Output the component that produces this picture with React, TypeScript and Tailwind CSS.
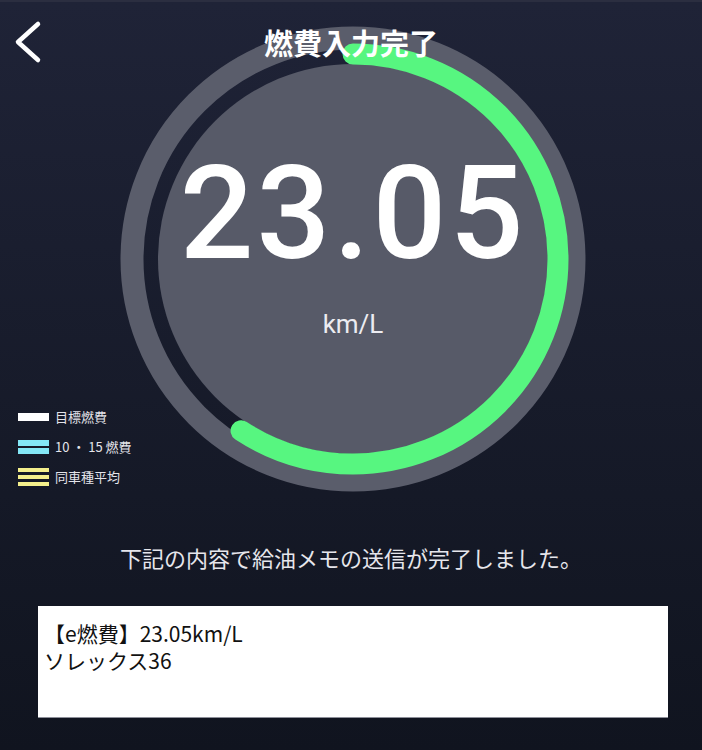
import React from 'react';

// Gauge geometry (svg is 470x470, center 235,235)
const GAUGE_SIZE = 470;
const ARC_R = 205;
const ARC_DEG = 213;

const legendRows = [
  { label: '目標燃費', kind: 'white' },
  { label: '10 ・ 15 燃費', kind: 'cyan' },
  { label: '同車種平均', kind: 'yellow' },
];

const LegendSwatch: React.FC<{ kind: string }> = ({ kind }) => {
  if (kind === 'white') {
    return <div className="w-[31px] h-[8px] bg-white" />;
  }
  if (kind === 'cyan') {
    return (
      <div className="w-[31px] flex flex-col gap-[2px]">
        <div className="h-[6px] bg-[#84e7f6]" />
        <div className="h-[6px] bg-[#84e7f6]" />
      </div>
    );
  }
  return (
    <div className="w-[31px] flex flex-col gap-[3px]">
      <div className="h-[4px] bg-[#f4ef8c]" />
      <div className="h-[4px] bg-[#f4ef8c]" />
      <div className="h-[4px] bg-[#f4ef8c]" />
    </div>
  );
};

const Gauge: React.FC = () => {
  const c = GAUGE_SIZE / 2;
  const circumference = 2 * Math.PI * ARC_R;
  const arcLen = (ARC_DEG / 360) * circumference;

  return (
    <svg width={GAUGE_SIZE} height={GAUGE_SIZE} viewBox={`0 0 ${GAUGE_SIZE} ${GAUGE_SIZE}`}>
      {/* outer track */}
      <circle cx={c} cy={c} r={221} fill="none" stroke="#5a5d6b" strokeWidth={23} />
      {/* inner disk */}
      <circle cx={c} cy={c} r={195} fill="#575a68" />
      {/* progress */}
      <circle
        cx={c}
        cy={c}
        r={ARC_R}
        fill="none"
        stroke="#57f680"
        strokeWidth={21}
        strokeLinecap="round"
        strokeDasharray={`${arcLen} ${circumference}`}
        transform={`rotate(-90 ${c} ${c})`}
      />
    </svg>
  );
};

export default function App() {
  return (
    <div
      className="relative w-full min-h-[750px] bg-gradient-to-b from-[#1f2337] to-[#10141f] border-t-[2px] border-[#2b2e40] text-white"
      style={{ fontFamily: '"Noto Sans CJK JP", "Noto Sans", sans-serif' }}
    >
      {/* header sits over the gauge */}
      <header className="absolute top-0 inset-x-0 h-[80px] z-10 flex items-center justify-center">
        <button className="absolute left-[12px] top-[16px] w-[34px] h-[48px] flex items-center justify-center">
          <svg width="34" height="48" viewBox="0 0 34 48">
            <path
              d="M26 6 L6 24 L26 42"
              fill="none"
              stroke="#ffffff"
              strokeWidth={4.5}
              strokeLinecap="round"
              strokeLinejoin="round"
            />
          </svg>
        </button>
        <h1 className="text-[29px] leading-[36px] font-bold tracking-normal">燃費入力完了</h1>
      </header>

      <section className="relative pt-[22px]">
        <div className="relative ml-[118px] w-[470px] h-[470px]">
          <Gauge />
          <div className="absolute inset-0 flex flex-col items-center pt-[125px]">
            <div
              className="text-[130px] leading-[130px] font-medium tracking-[3px] text-white"
              style={{ fontFamily: 'Roboto, "Liberation Sans", sans-serif' }}
            >
              23.05
            </div>
            <div
              className="mt-[32px] text-[26px] leading-[26px] text-[#ececf1]"
              style={{ fontFamily: 'Roboto, "Liberation Sans", sans-serif' }}
            >
              km/L
            </div>
          </div>
        </div>

        {/* legend */}
        <div className="absolute left-[18px] top-[400px] flex flex-col">
          {legendRows.map((row) => (
            <div key={row.kind} className="h-[30px] flex items-center gap-[6px]">
              <LegendSwatch kind={row.kind} />
              <span className="text-[13px] leading-[16px] text-[#e4e4ea]">{row.label}</span>
            </div>
          ))}
        </div>
      </section>

      <p className="mt-[48px] text-center text-[22px] leading-[30px] text-[#e6e6ec]">
        下記の内容で給油メモの送信が完了しました。
      </p>

      <div className="mt-[34px] ml-[38px] w-[630px] h-[112px] bg-white border-b border-[#8d8f99] pt-[14px] pl-[6px] text-[21px] leading-[27px] text-[#111111]">
        <div>【e燃費】23.05km/L</div>
        <div>ソレックス36</div>
      </div>
    </div>
  );
}
